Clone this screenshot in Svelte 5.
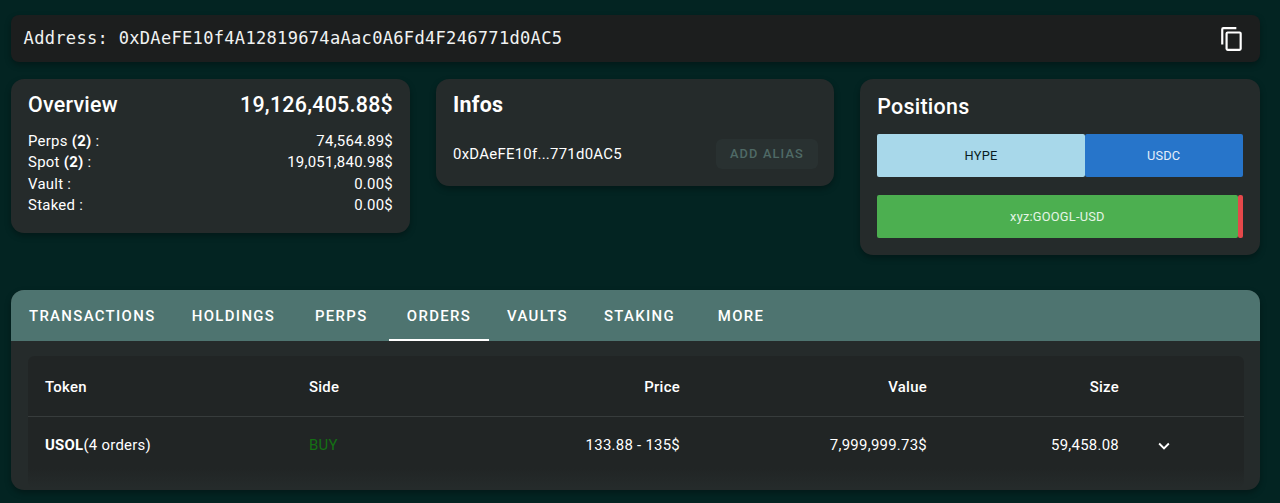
<script>
  const balances = [
    { label: 'Perps', count: 2, value: '74,564.89$' },
    { label: 'Spot', count: 2, value: '19,051,840.98$' },
    { label: 'Vault', value: '0.00$' },
    { label: 'Staked', value: '0.00$' }
  ];
  const tabs = [
    { name: 'Transactions', width: 162.5 },
    { name: 'Holdings', width: 120 },
    { name: 'Perps', width: 95.5 },
    { name: 'Orders', width: 100 },
    { name: 'Vaults', width: 97 },
    { name: 'Staking', width: 107 },
    { name: 'More', width: 96 }
  ];
  let active = $state('Orders');
</script>

<main>
  <div class="address">
    <span>Address: 0xDAeFE10f4A12819674aAac0A6Fd4F246771d0AC5</span>
    <svg class="copy" viewBox="0 0 24 24"><path fill="#fff" d="M19,21H8V7H19M19,5H8A2,2 0 0,0 6,7V21A2,2 0 0,0 8,23H19A2,2 0 0,0 21,21V7A2,2 0 0,0 19,5M16,1H4A2,2 0 0,0 2,3V17H4V3H16V1Z" /></svg>
  </div>

  <div class="cards">
    <section class="card overview">
      <h2><span>Overview</span><span>19,126,405.88$</span></h2>
      <div class="rows">
        {#each balances as b}
          <div class="row">
            <span>{b.label}{#if b.count}{' '}<b>({b.count})</b>{/if}{' :'}</span>
            <span>{b.value}</span>
          </div>
        {/each}
      </div>
    </section>

    <section class="card infos">
      <h2 class="strong">Infos</h2>
      <div class="alias">
        <span>0xDAeFE10f...771d0AC5</span>
        <button>ADD ALIAS</button>
      </div>
    </section>

    <section class="card positions">
      <h2>Positions</h2>
      <div class="bar">
        <div class="seg hype">HYPE</div>
        <div class="seg usdc">USDC</div>
      </div>
      <div class="bar">
        <div class="seg long">xyz:GOOGL-USD</div>
        <div class="seg short"></div>
      </div>
    </section>
  </div>

  <section class="panel">
    <nav>
      {#each tabs as t}
        <button class="tab" class:active={active === t.name} style="width: {t.width}px" onclick={() => (active = t.name)}>{t.name}</button>
      {/each}
    </nav>
    <div class="table">
      <div class="tr head">
        <span>Token</span><span>Side</span><span class="num">Price</span><span class="num">Value</span><span class="num">Size</span>
      </div>
      <div class="tr">
        <span><b>USOL</b>(4 orders)</span><span class="buy">BUY</span><span class="num">133.88 - 135$</span><span class="num">7,999,999.73$</span><span class="num">59,458.08</span>
        <svg class="chevron" viewBox="0 0 24 24"><path fill="#fff" d="M7.41,8.58L12,13.17L16.59,8.58L18,10L12,16L6,10L7.41,8.58Z" /></svg>
      </div>
    </div>
  </section>
</main>

<style>
  :global(body) { background: #032422; }
  main {
    box-sizing: border-box;
    width: 1280px;
    height: 503px;
    padding: 15px 20px 0 11px;
    overflow: hidden;
    font: 400 14.93px/21.33px Roboto, sans-serif;
    letter-spacing: 0.0178571em;
    color: #fff;
  }
  .address {
    display: flex;
    align-items: center;
    justify-content: space-between;
    box-sizing: border-box;
    height: 47px;
    padding: 0 15px 0 12.6px;
    border-radius: 8px;
    background: #1c1e1e;
    box-shadow: 0 3px 6px rgba(0, 0, 0, 0.3);
    font-family: "DejaVu Sans Mono", monospace;
    font-size: 17.07px;
    letter-spacing: 0.29px;
    color: #f0f2f2;
  }
  .copy { width: 26px; height: 26px; }
  .cards {
    display: grid;
    grid-template-columns: 399px 398px 399.5px;
    gap: 26px;
    align-items: start;
    height: 211px;
    margin-top: 17px;
  }
  .card {
    box-sizing: border-box;
    padding: 0 17px;
    border-radius: 13px;
    background: #252b2b;
    box-shadow: 0 3px 6px rgba(0, 0, 0, 0.3);
  }
  h2 {
    display: flex;
    justify-content: space-between;
    margin: 0;
    font-size: 21.4px;
    line-height: 34px;
    font-weight: 500;
    letter-spacing: 0.0125em;
  }
  .strong { font-weight: 700; }
  .overview { height: 154px; padding-top: 9px; }
  .rows { margin-top: 9px; }
  .row { display: flex; justify-content: space-between; }
  .infos { height: 106.5px; padding-top: 9px; }
  .alias {
    display: flex;
    align-items: center;
    justify-content: space-between;
    margin: 17px -1px 0 0;
  }
  .alias span { padding-top: 1px; }
  .alias button {
    width: 102px;
    height: 30px;
    padding: 0 0 1px;
    border: 0;
    border-radius: 6px;
    background: #293131;
    color: #4f6a66;
    font: 500 12.8px Roboto, sans-serif;
    letter-spacing: 0.0892857em;
  }
  .positions { height: 176px; padding: 11px 17px 0 17.3px; }
  .bar { display: flex; height: 43px; margin-top: 10px; }
  .bar + .bar { margin-top: 18px; }
  .seg {
    display: flex;
    align-items: center;
    justify-content: center;
    border-radius: 2px;
    font-size: 12.8px;
    letter-spacing: 0.0178571em;
  }
  .hype { flex: 208; background: #a8d8ea; color: #0a1c22; }
  .usdc { flex: 158; background: #2775ca; color: #e4eefa; }
  .long { flex: 1; background: #4caf50; color: #e6f5e6; }
  .short { width: 5px; background: #e5484a; }
  .panel {
    height: 200px;
    border-radius: 13px;
    overflow: hidden;
    background: #252b2b;
    box-shadow: 0 3px 6px rgba(0, 0, 0, 0.3);
  }
  nav { display: flex; height: 51px; background: #4e7470; }
  .tab {
    padding: 2px 0 0;
    border: 0;
    border-bottom: 2px solid transparent;
    background: none;
    color: #fff;
    font: 500 14.93px Roboto, sans-serif;
    letter-spacing: 0.0892857em;
    text-transform: uppercase;
  }
  .tab.active { border-color: #fff; }
  .table {
    height: 132px;
    margin: 15px 16px 0 17px;
    border-radius: 6px;
    background: linear-gradient(#212525 85%, #252b2b);
  }
  .tr {
    display: grid;
    grid-template-columns: 264px 171px 200px 247px 192px 92px;
    align-items: center;
    height: 58px;
    padding-left: 17px;
  }
  .head {
    box-sizing: border-box;
    height: 61px;
    padding-top: 3px;
    border-bottom: 1px solid #373c3c;
    font-weight: 500;
  }
  .num { text-align: right; }
  .buy { color: #147014; }
  .chevron { width: 22px; height: 22px; margin: 0 0 0 34px; }
</style>
